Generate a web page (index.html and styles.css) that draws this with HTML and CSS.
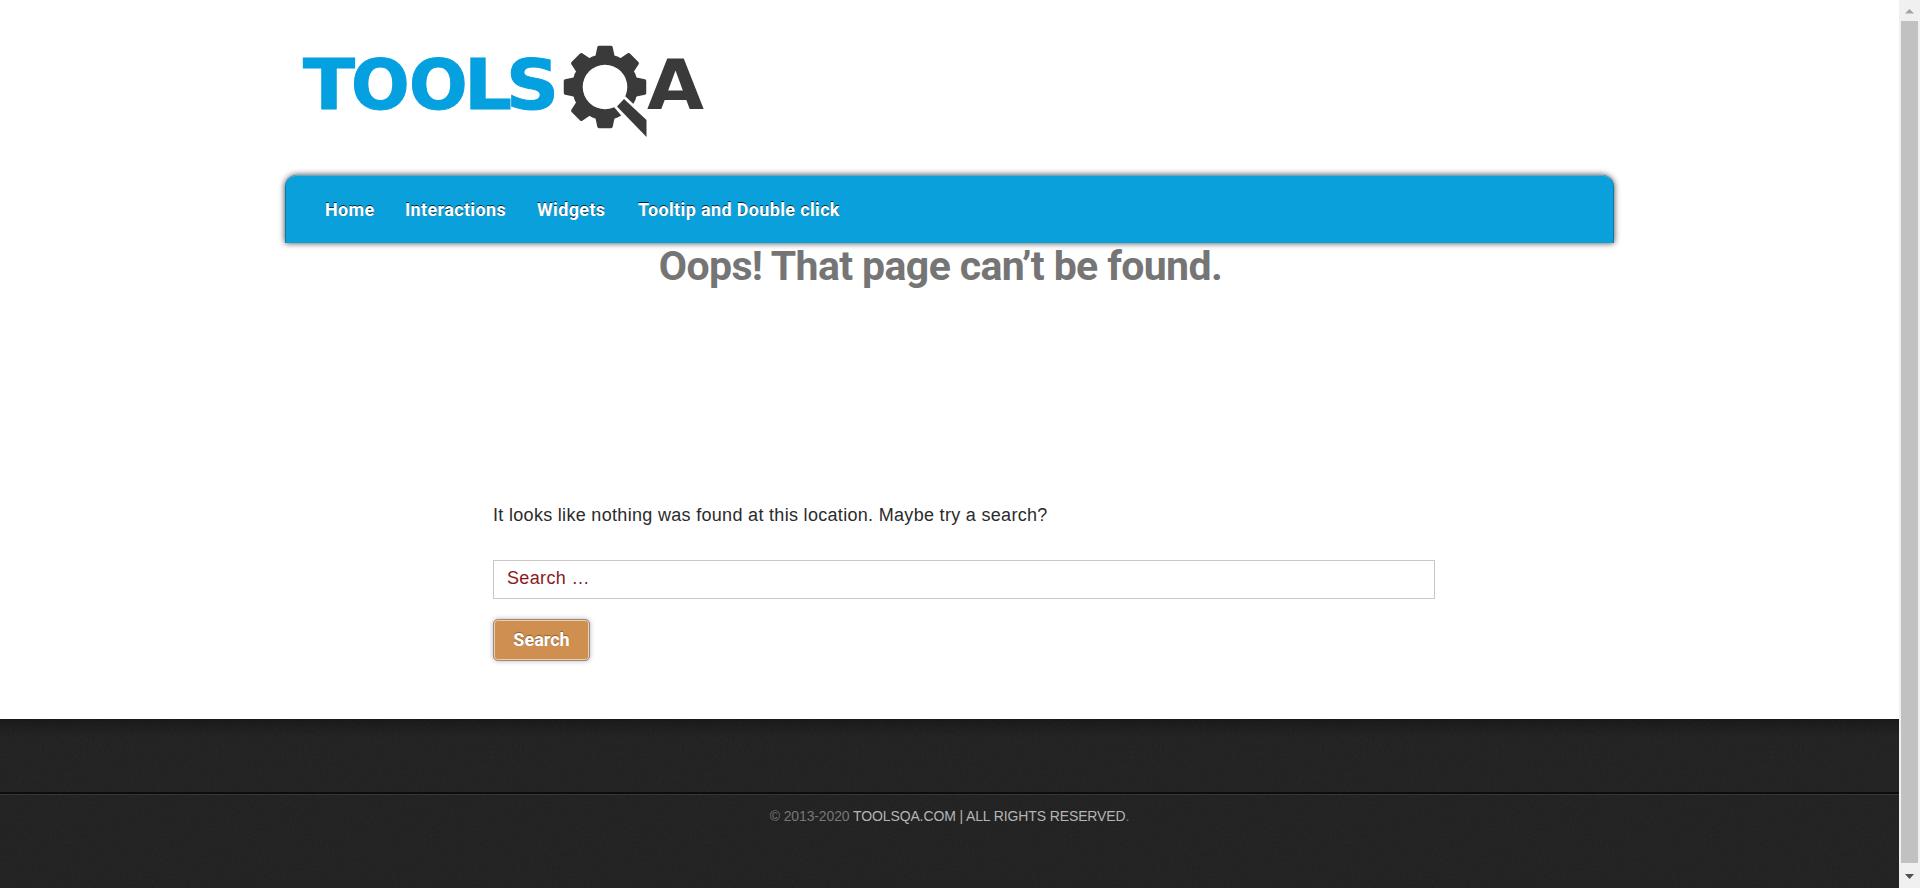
FILE: index.html
```html
<!DOCTYPE html>
<html lang="en">
<head>
<meta charset="utf-8">
<title>Page not found - ToolsQA</title>
<link rel="stylesheet" href="styles.css">
</head>
<body>
<div class="viewport">
  <div class="page">
    <header class="header">
      <a class="logo" href="#" aria-label="TOOLSQA">
        <svg width="430" height="120" viewBox="290 30 430 120">
          <g class="logo-text">
            <g class="logo-blue">
              <text x="303" y="109" textLength="52" lengthAdjust="spacingAndGlyphs">T</text>
              <text x="351 409" y="109">OO</text>
              <text x="464" y="109" textLength="48" lengthAdjust="spacingAndGlyphs">L</text>
              <text x="506" y="109" textLength="53" lengthAdjust="spacingAndGlyphs">S</text>
            </g>
            <text class="logo-dark" x="647" y="109" textLength="57" lengthAdjust="spacingAndGlyphs">A</text>
          </g>
          <defs>
            <mask id="lens" maskUnits="userSpaceOnUse" x="550" y="35" width="110" height="115">
              <rect x="550" y="35" width="110" height="115" fill="#fff"/>
              <circle cx="605" cy="87" r="22.3" fill="#000"/>
              <path d="M614 107L625 96L665 134L652 152Z" fill="#000"/>
            </mask>
            <path id="tooth" d="M599 47.500H611L613 57H597Z"/>
          </defs>
          <g fill="#3a3a3a">
            <g mask="url(#lens)">
              <circle cx="605" cy="87" r="33"/>
              <g stroke="#3a3a3a" stroke-width="3.500" stroke-linejoin="round">
                <use href="#tooth"/>
                <use href="#tooth" transform="rotate(45 605 87)"/>
                <use href="#tooth" transform="rotate(90 605 87)"/>
                <use href="#tooth" transform="rotate(180 605 87)"/>
                <use href="#tooth" transform="rotate(225 605 87)"/>
                <use href="#tooth" transform="rotate(270 605 87)"/>
                <use href="#tooth" transform="rotate(315 605 87)"/>
              </g>
            </g>
            <path d="M617 106.500L624 99L646.500 120V137Z"/>
          </g>
        </svg>
      </a>
      <nav class="nav">
        <a class="nav-home" href="#">Home</a>
        <a class="nav-interactions" href="#">Interactions</a>
        <a class="nav-widgets" href="#">Widgets</a>
        <a class="nav-tooltip" href="#">Tooltip and Double click</a>
      </nav>
    </header>
    <main class="main">
      <h1 class="title">Oops! That page can’t be found.</h1>
      <section class="content">
        <p class="message">It looks like nothing was found at this location. Maybe try a search?</p>
        <form class="search">
          <input class="search-field" type="text" placeholder="Search …" aria-label="Search for">
          <button class="search-button" type="button">Search</button>
        </form>
      </section>
    </main>
    <footer class="footer">
      <svg class="grain" width="100%" height="100%" aria-hidden="true">
        <filter id="noise"><feTurbulence type="fractalNoise" baseFrequency=".4" numOctaves="2"/><feColorMatrix type="saturate" values="0"/></filter>
        <rect width="100%" height="100%" filter="url(#noise)"/>
      </svg>
      <div class="footer-widgets"></div>
      <p class="copyright">© 2013-2020 <a href="#">TOOLSQA.COM | ALL RIGHTS RESERVED</a>.</p>
    </footer>
  </div>
  <div class="scrollbar">
    <svg width="21" height="21"><path d="M6 13.500L10.500 9L15 13.500Z" fill="#a3a3a3"/></svg>
    <div class="thumb"></div>
    <svg width="21" height="25"><path d="M6 11L10.500 16L15 11Z" fill="#505050"/></svg>
  </div>
</div>
</body>
</html>
```
FILE: styles.css
```css
* { box-sizing: border-box; }
body { margin: 0; background: #fff; font-family: "Liberation Sans", Arial, sans-serif; overflow: hidden; }
.viewport { display: flex; width: 1920px; height: 888px; }
.page { width: 1899px; display: flex; flex-direction: column; }
.header { width: 1329px; margin: 0 auto; height: 243px; padding-top: 30px; display: flex; flex-direction: column; justify-content: space-between; }
.logo { display: block; height: 120px; margin-left: 5px; }
.logo svg { display: block; }
.logo-text { font: 700 69px "DejaVu Sans", sans-serif; }
.logo-blue { fill: #04a0df; stroke: #04a0df; }
.logo-dark { fill: #3a3a3a; }
.nav { height: 68px; flex: none; padding: 2px 0 0 40px; display: flex; align-items: center; gap: 30px; background: #0aa0dc; border-radius: 12px 12px 0 0; box-shadow: 0 0 6px rgba(0,0,0,.75), inset 0 1px 0 #5caac6, inset 1px 0 0 #087bab, inset -1px 0 0 #087bab; }
.nav a { font: 700 18px/22px Roboto, sans-serif; letter-spacing: .35px; color: #fff; text-decoration: none; text-shadow: 0 -1px 0 rgba(0,0,0,.75); white-space: nowrap; }
.nav-home { width: 50px; }
.nav-interactions { width: 102px; }
.nav-widgets { width: 71px; }
.main { height: 476px; display: flex; flex-direction: column; }
.title { margin: 0; padding-right: 18px; height: 48px; font: 700 41px/46px Roboto, sans-serif; letter-spacing: -.62px; color: #757575; text-align: center; white-space: nowrap; }
.content { width: 942px; margin: 208px 0 0 493px; }
.message { margin: 0; font-size: 18px; line-height: 32px; letter-spacing: .31px; color: #2b2b2b; }
.search { margin-top: 29px; display: flex; flex-direction: column; align-items: flex-start; gap: 20px; }
.search-field { width: 942px; height: 39px; margin: 0; padding: 0 13px 2px; border: 1px solid #c8c8c8; font: 18px "Liberation Sans", Arial, sans-serif; letter-spacing: .35px; }
.search-field::placeholder { color: #8b1a1a; opacity: 1; }
.search-button { width: 97px; height: 42px; padding: 0; background: #cf8f50; border: 1px solid #998c80; border-radius: 5px; box-shadow: inset 0 0 0 1px #edcfad, 0 0 5px rgba(0,0,0,.3); color: #fff; font: 700 18px/22px Roboto, sans-serif; text-shadow: 0 -1px 1px rgba(0,0,0,.35); }
.footer { position: relative; flex: 1; background: linear-gradient(#171717, #212121 18px); }
.grain { position: absolute; inset: 0; opacity: .035; }
.footer-widgets { height: 75px; border-bottom: 2px solid #0a0a0a; box-shadow: 0 1px 0 #343434; }
.copyright { position: relative; margin: 0; padding-top: 12px; font-size: 14px; line-height: 20px; letter-spacing: -.12px; color: #777; text-align: center; }
.copyright a { color: #b5b5b5; text-decoration: none; }
.scrollbar { width: 21px; display: flex; flex-direction: column; background: #f0f0f0; }
.scrollbar svg { display: block; flex: none; }
.thumb { flex: 1; margin: 0 2px; background: #c1c1c1; }
```
